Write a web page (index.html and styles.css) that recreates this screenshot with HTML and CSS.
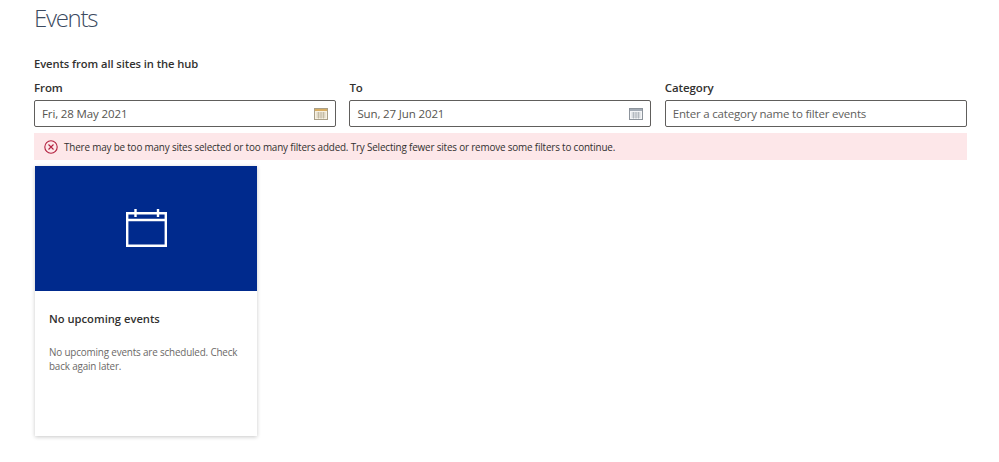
FILE: index.html
```html
<!DOCTYPE html>
<html lang="en">
<head>
<meta charset="utf-8">
<title>Events</title>
<link rel="stylesheet" href="styles.css">
</head>
<body>
<main class="page">
  <h1 class="title">Events</h1>
  <h2 class="subtitle">Events from all sites in the hub</h2>
  <div class="filters">
    <div class="field">
      <label class="label">From</label>
      <div class="input"><span class="value">Fri, 28 May 2021</span>
        <svg class="cal" viewBox="0 0 14 12"><rect x="0.5" y="0.5" width="13" height="11" fill="#f7f1e2" stroke="#a99f88"/><rect x="1" y="1" width="12" height="2" fill="#d8ad62"/><path d="M2.5 5h9M2.5 7h9M2.5 9h9M4.5 4v6.5M7 4v6.5M9.5 4v6.5" stroke="#bdb49c" stroke-width=".8" fill="none"/></svg>
      </div>
    </div>
    <div class="field">
      <label class="label">To</label>
      <div class="input"><span class="value">Sun, 27 Jun 2021</span>
        <svg class="cal" viewBox="0 0 14 12"><rect x="0.5" y="0.5" width="13" height="11" fill="#f4f5f7" stroke="#8d949c"/><rect x="1" y="1" width="12" height="2" fill="#a3abb5"/><path d="M2.5 5h9M2.5 7h9M2.5 9h9M4.5 4v6.5M7 4v6.5M9.5 4v6.5" stroke="#aab0b8" stroke-width=".8" fill="none"/></svg>
      </div>
    </div>
    <div class="field">
      <label class="label">Category</label>
      <div class="input"><span class="placeholder">Enter a category name to filter events</span></div>
    </div>
  </div>
  <div class="message">
    <svg class="err" viewBox="0 0 14 14"><circle cx="7" cy="7" r="6.2" fill="none" stroke="#b3213f" stroke-width="1.1"/><path d="M4.5 4.5l5 5M9.5 4.5l-5 5" stroke="#b3213f" stroke-width="1.1" fill="none"/></svg>
    <span>There may be too many sites selected or too many filters added. Try Selecting fewer sites or remove some filters to continue.</span>
  </div>
  <article class="card">
    <div class="hero">
      <svg class="hero-icon" viewBox="0 0 41 38"><path d="M1.2 4.2h38.6v32.6H1.2zM1.2 11h38.6M9.5 0v8M32 0v8" fill="none" stroke="#fff" stroke-width="2.4"/></svg>
    </div>
    <div class="body">
      <h3 class="card-title">No upcoming events</h3>
      <p class="card-text">No upcoming events are scheduled. Check back again later.</p>
    </div>
  </article>
</main>
</body>
</html>
```
FILE: styles.css
```css
html, body { margin: 0; padding: 0; background: #fff; }
body { font-family: "Open Sans", "Noto Sans", sans-serif; color: #323130; height: 462px; overflow: hidden; }
.page { padding: 0 32px 0 34px; }
.title { margin: 0; font-size: 24px; font-weight: 300; line-height: 36px; color: #3b4a60; letter-spacing: -1.3px; }
.subtitle { margin: 20px 0 0; font-size: 11.2px; font-weight: 600; line-height: 16px; letter-spacing: -0.07px; }
.filters { display: grid; grid-template-columns: repeat(3, 302px); column-gap: 13.4px; margin-top: 8px; }
.field { display: flex; flex-direction: column; }
.label { font-size: 11.5px; font-weight: 600; line-height: 16px; margin-bottom: 4px; letter-spacing: -0.1px; }
.input { display: flex; align-items: center; justify-content: space-between; box-sizing: border-box; height: 27px; border: 1px solid #605e5c; border-radius: 2px; padding: 0 7px; font-size: 11.5px; letter-spacing: -0.2px; }
.value { color: #56544f; letter-spacing: -0.13px; }
.placeholder { color: #605e5c; }
.cal { width: 14px; height: 12px; }
.message { display: flex; align-items: center; gap: 6px; box-sizing: border-box; width: 933px; height: 27px; margin-top: 6px; padding-left: 10px; background: #fde7e9; font-size: 9.9px; letter-spacing: -0.17px; color: #323130; }
.err { width: 14px; height: 14px; flex: none; }
.card { width: 222px; height: 270px; margin: 6px 0 0 1px; background: #fff; box-shadow: 0 1px 4px rgba(0,0,0,.22); }
.hero { height: 125px; background: #002a8d; display: flex; align-items: center; justify-content: center; }
.hero-icon { width: 41px; height: 38px; margin-top: -2px; }
.body { padding: 20px 14px 0; }
.card-title { margin: 0; font-size: 11.2px; font-weight: 600; line-height: 16px; }
.card-text { margin: 19px 0 0; font-size: 9.9px; line-height: 13.5px; color: #6b6967; letter-spacing: -0.17px; }
```
